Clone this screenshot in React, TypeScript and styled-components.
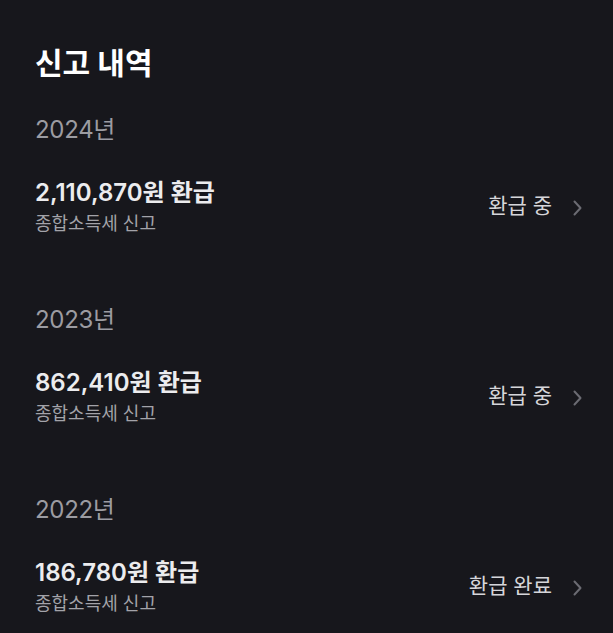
import styled, { createGlobalStyle } from 'styled-components'

const GlobalStyle = createGlobalStyle`
  html, body {
    margin: 0;
    background: #17171c;
  }
  body {
    font-family: Inter, "Noto Sans CJK KR", sans-serif;
    -webkit-font-smoothing: antialiased;
  }
`

const history = [
  { year: '2024년', amount: '2,110,870원 환급', status: '환급 중' },
  { year: '2023년', amount: '862,410원 환급', status: '환급 중' },
  { year: '2022년', amount: '186,780원 환급', status: '환급 완료' },
]

function Chevron() {
  return (
    <svg width="12" height="18" viewBox="0 0 12 18" fill="none">
      <path d="M3.5 2.5L9.5 9L3.5 15.5" stroke="#6b6b72" strokeWidth="2" strokeLinecap="round" strokeLinejoin="round" />
    </svg>
  )
}

export default function App() {
  return (
    <Page>
      <GlobalStyle />
      <Title>신고 내역</Title>
      {history.map((item) => (
        <Section key={item.year}>
          <Year>{item.year}</Year>
          <Row>
            <Info>
              <Amount>{item.amount}</Amount>
              <Sub>종합소득세 신고</Sub>
            </Info>
            <Status>
              <StatusText>{item.status}</StatusText>
              <Chevron />
            </Status>
          </Row>
        </Section>
      ))}
    </Page>
  )
}

const Page = styled.main`
  padding: 45px 30px 0 35px;
  min-height: 100vh;
  box-sizing: border-box;
  color: #fff;
`

const Title = styled.h1`
  margin: 0;
  font-size: 30px;
  line-height: 36px;
  font-weight: 700;
  color: #ffffff;
`

const Section = styled.section`
  margin-top: 34px;

  & + & {
    margin-top: 69px;
  }
`

const Year = styled.div`
  font-size: 24px;
  line-height: 30px;
  color: #9c9ca2;
  letter-spacing: -0.3px;
`

const Row = styled.div`
  margin-top: 35px;
  display: flex;
  align-items: center;
  justify-content: space-between;
`

const Info = styled.div`
  display: flex;
  flex-direction: column;
`

const Amount = styled.div`
  font-size: 24px;
  line-height: 26px;
  font-weight: 600;
  color: #ececee;
`

const Sub = styled.div`
  margin-top: 6px;
  font-size: 18px;
  line-height: 24px;
  color: #a3a3a9;
`

const Status = styled.div`
  display: flex;
  align-items: center;
  gap: 19px;
  padding-bottom: 4px;

  svg {
    margin-top: 3px;
  }
`

const StatusText = styled.span`
  font-size: 21px;
  line-height: 24px;
  color: #d6d6da;
`
